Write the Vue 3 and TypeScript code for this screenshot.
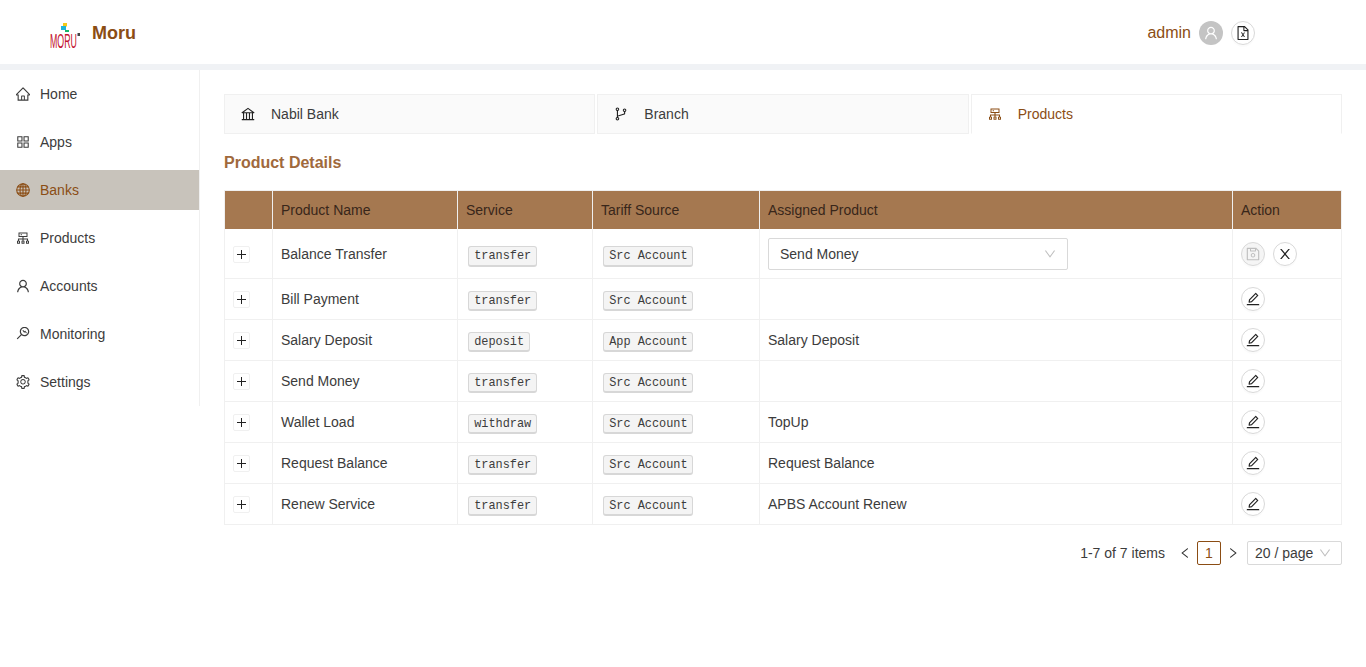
<script setup lang="ts">
const P: Record<string, string> = {
  home: 'M946.5 505L560.1 118.8l-25.9-25.9a31.5 31.5 0 0 0-44.4 0L77.5 505a63.9 63.9 0 0 0-18.8 46c.4 35.2 29.7 63.3 64.9 63.3h42.5V940h691.8V614.3h43.4c17.1 0 33.2-6.7 45.3-18.8a63.6 63.6 0 0 0 18.7-45.3c0-17-6.7-33.1-18.8-45.2zM568 868H456V664h112v204zm217.9-325.7V868H632V640c0-22.1-17.9-40-40-40H432c-22.1 0-40 17.9-40 40v228H238.1V542.3h-96l370-369.7 23.1 23.1L882 542.3h-96.1z',
  apps: 'M464 144H160c-8.8 0-16 7.2-16 16v304c0 8.8 7.2 16 16 16h304c8.8 0 16-7.2 16-16V160c0-8.8-7.2-16-16-16zm-52 268H212V212h200v200zm452-268H560c-8.8 0-16 7.2-16 16v304c0 8.8 7.2 16 16 16h304c8.8 0 16-7.2 16-16V160c0-8.8-7.2-16-16-16zm-52 268H612V212h200v200zM464 544H160c-8.8 0-16 7.2-16 16v304c0 8.8 7.2 16 16 16h304c8.8 0 16-7.2 16-16V560c0-8.8-7.2-16-16-16zm-52 268H212V612h200v200zm452-268H560c-8.8 0-16 7.2-16 16v304c0 8.8 7.2 16 16 16h304c8.8 0 16-7.2 16-16V560c0-8.8-7.2-16-16-16zm-52 268H612V612h200v200z',
  cluster: 'M888 680h-54V540H546v-92h238c8.8 0 16-7.2 16-16V168c0-8.8-7.2-16-16-16H240c-8.8 0-16 7.2-16 16v264c0 8.8 7.2 16 16 16h238v92H190v140h-54c-4.4 0-8 3.6-8 8v176c0 4.4 3.6 8 8 8h176c4.4 0 8-3.6 8-8V688c0-4.4-3.6-8-8-8h-54v-72h220v72h-54c-4.4 0-8 3.6-8 8v176c0 4.4 3.6 8 8 8h176c4.4 0 8-3.6 8-8V688c0-4.4-3.6-8-8-8h-54v-72h220v72h-54c-4.4 0-8 3.6-8 8v176c0 4.4 3.6 8 8 8h176c4.4 0 8-3.6 8-8V688c0-4.4-3.6-8-8-8zM256 805.3c0 1.5-1.2 2.7-2.7 2.7h-58.7c-1.5 0-2.7-1.2-2.7-2.7v-58.7c0-1.5 1.2-2.7 2.7-2.7h58.7c1.5 0 2.7 1.2 2.7 2.7v58.7zm288 0c0 1.5-1.2 2.7-2.7 2.7h-58.7c-1.5 0-2.7-1.2-2.7-2.7v-58.7c0-1.5 1.2-2.7 2.7-2.7h58.7c1.5 0 2.7 1.2 2.7 2.7v58.7zM288 384V216h448v168H288zm544 421.3c0 1.5-1.2 2.7-2.7 2.7h-58.7c-1.5 0-2.7-1.2-2.7-2.7v-58.7c0-1.5 1.2-2.7 2.7-2.7h58.7c1.5 0 2.7 1.2 2.7 2.7v58.7zM360 300a40 40 0 1 0 80 0 40 40 0 1 0-80 0z',
  user: 'M858.5 763.6a374 374 0 0 0-80.6-119.5 375.63 375.63 0 0 0-119.5-80.6c-.4-.2-.8-.3-1.2-.5C719.5 518 760 444.7 760 362c0-137-111-248-248-248S264 225 264 362c0 82.7 40.5 156 102.8 201.1-.4.2-.8.3-1.2.5-44.8 18.9-85 46-119.5 80.6a375.63 375.63 0 0 0-80.6 119.5A371.7 371.7 0 0 0 136 901.8a8 8 0 0 0 8 8.2h60c4.4 0 7.9-3.5 8-7.8 2-77.2 33-149.5 87.8-204.3 56.7-56.7 132-87.9 212.2-87.9s155.5 31.2 212.2 87.9C779 752.7 810 825 812 902.2c.1 4.4 3.6 7.8 8 7.8h60a8 8 0 0 0 8-8.2c-1-47.8-10.9-94.3-29.5-138.2zM512 534c-45.9 0-89.1-17.9-121.6-50.4S340 407.9 340 362c0-45.9 17.9-89.1 50.4-121.6S466.1 190 512 190s89.1 17.9 121.6 50.4S684 316.1 684 362c0 45.9-17.9 89.1-50.4 121.6S557.9 534 512 534z',
  monitor: 'M692.8 412.7l.2-.2-34.6-44.3a7.97 7.97 0 0 0-11.2-1.4l-50.4 39.3-70.5-90.1a7.97 7.97 0 0 0-11.2-1.4l-37.9 29.7a7.97 7.97 0 0 0-1.4 11.2l70.5 90.2-.2.1 34.6 44.3c2.7 3.5 7.7 4.1 11.2 1.4l50.4-39.3 64.1 82c2.7 3.5 7.7 4.1 11.2 1.4l37.9-29.6c3.5-2.7 4.1-7.7 1.4-11.2l-64.1-82.1zM608 112c-167.9 0-304 136.1-304 304 0 70.3 23.9 135 63.9 186.5L114.3 856.1a8.03 8.03 0 0 0 0 11.3l42.3 42.3c3.1 3.1 8.2 3.1 11.3 0l253.6-253.6c51.5 40 116.2 63.9 186.5 63.9 167.9 0 304-136.1 304-304S775.9 112 608 112zm161.2 465.2C726.2 620.3 668.9 644 608 644s-118.2-23.7-161.2-66.8C403.7 534.2 380 476.9 380 416s23.7-118.2 66.8-161.2c43-43.1 100.3-66.8 161.2-66.8s118.2 23.7 161.2 66.8c43.1 43 66.8 100.3 66.8 161.2s-23.7 118.2-66.8 161.2z',
  setting: 'M924.8 625.7l-65.5-56c3.1-19 4.7-38.4 4.7-57.8s-1.6-38.8-4.7-57.8l65.5-56a32.03 32.03 0 0 0 9.3-35.2l-.9-2.6a443.74 443.74 0 0 0-79.7-137.9l-1.8-2.1a32.12 32.12 0 0 0-35.1-9.5l-81.3 28.9c-30-24.6-63.5-44-99.7-57.6l-15.7-85a32.05 32.05 0 0 0-25.8-25.7l-2.7-.5c-52.1-9.4-106.9-9.4-159 0l-2.7.5a32.05 32.05 0 0 0-25.8 25.7l-15.8 85.4a351.86 351.86 0 0 0-99 57.4l-81.9-29.1a32 32 0 0 0-35.1 9.5l-1.8 2.1a446.02 446.02 0 0 0-79.7 137.9l-.9 2.6c-4.5 12.5-.8 26.5 9.3 35.2l66.3 56.6c-3.1 18.8-4.6 38-4.6 57.1 0 19.2 1.5 38.4 4.6 57.1L99 625.5a32.03 32.03 0 0 0-9.3 35.2l.9 2.6c18.1 50.4 44.9 96.9 79.7 137.9l1.8 2.1a32.12 32.12 0 0 0 35.1 9.5l81.9-29.1c29.8 24.5 63.1 43.9 99 57.4l15.8 85.4a32.05 32.05 0 0 0 25.8 25.7l2.7.5a449.4 449.4 0 0 0 159 0l2.7-.5a32.05 32.05 0 0 0 25.8-25.7l15.7-85a350 350 0 0 0 99.7-57.6l81.3 28.9a32 32 0 0 0 35.1-9.5l1.8-2.1c34.8-41.1 61.6-87.5 79.7-137.9l.9-2.6c4.5-12.3.8-26.3-9.3-35zM788.3 465.9c2.5 15.1 3.8 30.6 3.8 46.1s-1.3 31-3.8 46.1l-6.6 40.1 74.7 63.9a370.03 370.03 0 0 1-42.6 73.6L721 702.8l-31.4 25.8c-23.9 19.6-50.5 35-79.3 45.8l-38.1 14.3-17.9 97a377.5 377.5 0 0 1-85 0l-17.9-97.2-37.8-14.5c-28.5-10.8-55-26.2-78.7-45.7l-31.4-25.9-93.4 33.2c-17-22.9-31.2-47.6-42.6-73.6l75.5-64.5-6.5-40c-2.4-14.9-3.7-30.3-3.7-45.5 0-15.3 1.2-30.6 3.7-45.5l6.5-40-75.5-64.5c11.3-26.1 25.6-50.7 42.6-73.6l93.4 33.2 31.4-25.9c23.7-19.5 50.2-34.9 78.7-45.7l37.9-14.3 17.9-97.2c28.1-3.2 56.8-3.2 85 0l17.9 97 38.1 14.3c28.7 10.8 55.4 26.2 79.3 45.8l31.4 25.8 92.8-32.9c17 22.9 31.2 47.6 42.6 73.6L781.8 426l6.5 39.9zM512 326c-97.2 0-176 78.8-176 176s78.8 176 176 176 176-78.8 176-176-78.8-176-176-176zm79.2 255.2A111.6 111.6 0 0 1 512 614c-29.9 0-58-11.7-79.2-32.8A111.6 111.6 0 0 1 400 502c0-29.9 11.7-58 32.8-79.2C454 401.6 482.1 390 512 390c29.9 0 58 11.6 79.2 32.8A111.6 111.6 0 0 1 624 502c0 29.9-11.7 58-32.8 79.2z',
  edit: 'M257.7 752c2 0 4-.2 6-.5L431.9 722c2-.4 3.9-1.3 5.3-2.8l423.9-423.9a9.96 9.96 0 0 0 0-14.1L694.9 114.9c-1.9-1.9-4.4-2.9-7.1-2.9s-5.2 1-7.1 2.9L256.8 538.8c-1.5 1.5-2.4 3.3-2.8 5.3l-29.5 168.2a33.5 33.5 0 0 0 9.4 29.8c6.6 6.4 14.9 9.9 23.8 9.9zm67.4-174.4L687.8 215l73.3 73.3-362.7 362.6-88.9 15.7 15.6-89zM880 836H144c-17.7 0-32 14.3-32 32v36c0 4.4 3.6 8 8 8h784c4.4 0 8-3.6 8-8v-36c0-17.7-14.3-32-32-32z',
  close: 'M563.8 512l262.5-312.9c4.4-5.2.7-13.1-6.1-13.1h-79.8c-4.7 0-9.2 2.1-12.3 5.7L511.6 449.8 295.1 191.7c-3-3.6-7.5-5.7-12.3-5.7H203c-6.8 0-10.5 7.9-6.1 13.1L459.4 512 196.9 824.9A7.95 7.95 0 0 0 203 838h79.8c4.7 0 9.2-2.1 12.3-5.7l216.5-258.1 216.5 258.1c3 3.6 7.5 5.7 12.3 5.7h79.8c6.8 0 10.5-7.9 6.1-13.1L563.8 512z',
  save: 'M893.3 293.3L730.7 130.7c-7.5-7.5-16.7-13-26.7-16V112H144c-17.7 0-32 14.3-32 32v736c0 17.7 14.3 32 32 32h736c17.7 0 32-14.3 32-32V338.5c0-17-6.7-33.2-18.7-45.2zM384 184h256v104H384V184zm456 656H184V184h136v136c0 17.7 14.3 32 32 32h320c17.7 0 32-14.3 32-32V205.8l136 136V840zM512 442c-79.5 0-144 64.5-144 144s64.5 144 144 144 144-64.5 144-144-64.5-144-144-144zm0 224c-44.2 0-80-35.8-80-80s35.8-80 80-80 80 35.8 80 80-35.8 80-80 80z',
  bank: 'M894 462c30.9 0 43.8-39.7 18.7-58L530.8 126.2a31.81 31.81 0 0 0-37.6 0L111.3 404c-25.1 18.2-12.2 58 18.8 58H192v374h-72c-4.4 0-8 3.6-8 8v52c0 4.4 3.6 8 8 8h784c4.4 0 8-3.6 8-8v-52c0-4.4-3.6-8-8-8h-72V462h62zM512 196.7l271.1 197.2H240.9L512 196.7zM264 462h117v374H264V462zm189 0h117v374H453V462zm307 374H642V462h118v374z',
  branch: 'M740 161c-61.8 0-112 50.2-112 112 0 50.1 33.1 92.6 78.5 106.9v95.9L320 602.4V318.1c44.2-15 76-56.9 76-106.1 0-61.8-50.2-112-112-112s-112 50.2-112 112c0 49.2 31.8 91 76 106.1V706c-44.2 15-76 56.9-76 106.1 0 61.8 50.2 112 112 112s112-50.2 112-112c0-49.2-31.8-91-76-106.1v-27.8l423.5-138.7a50.52 50.52 0 0 0 34.9-48.2V378.2c42.9-15.8 73.6-57 73.6-105.2 0-61.8-50.2-112-112-112zm-504 51a48.01 48.01 0 0 1 96 0 48.01 48.01 0 0 1-96 0zm96 600a48.01 48.01 0 0 1-96 0 48.01 48.01 0 0 1 96 0zm408-491a48.01 48.01 0 0 1 0-96 48.01 48.01 0 0 1 0 96z',
  file: 'M854.6 288.6L639.4 73.4c-6-6-14.1-9.4-22.6-9.4H192c-17.7 0-32 14.3-32 32v832c0 17.7 14.3 32 32 32h640c17.7 0 32-14.3 32-32V311.3c0-8.5-3.4-16.7-9.4-22.7zM790.2 326H602V137.8L790.2 326zm1.8 562H232V136h302v216a42 42 0 0 0 42 42h216v494zM514.1 580.1l-61.8-102.4c-2.2-3.6-6.1-5.8-10.3-5.8h-38.4c-2.3 0-4.5.6-6.4 1.9-5.6 3.5-7.3 10.9-3.7 16.6l82.3 130.4-83.4 132.8a12.04 12.04 0 0 0 10.2 18.4h34.5c4.2 0 8-2.2 10.2-5.7L510 664.8l62.3 101.4c2.2 3.6 6.1 5.7 10.2 5.7H620c2.3 0 4.5-.7 6.5-1.9 5.6-3.6 7.2-11 3.6-16.6l-84-130.4 85.3-132.5a12.04 12.04 0 0 0-10.1-18.5h-35.7c-4.2 0-8.1 2.2-10.3 5.8l-61.2 102.3z',
  down: 'M884 256h-75c-5.1 0-9.9 2.5-12.9 6.6L512 654.2 227.9 262.6c-3-4.1-7.8-6.6-12.9-6.6h-75c-6.5 0-10.3 7.4-6.5 12.7l352.6 486.1c12.8 17.6 39 17.6 51.7 0l352.6-486.1c3.9-5.3.1-12.7-6.4-12.7z',
  left: 'M724 218.3V141c0-6.7-7.7-10.4-12.9-6.3L260.3 486.8a31.86 31.86 0 0 0 0 50.3l450.8 352.1c5.3 4.1 12.9.4 12.9-6.3v-77.3c0-4.9-2.3-9.6-6.1-12.6l-360-281 360-281.1c3.8-3 6.1-7.7 6.1-12.6z',
  right: 'M765.7 486.8L314.9 134.7A7.97 7.97 0 0 0 302 141v77.3c0 4.9 2.3 9.6 6.1 12.6l360 281.1-360 281.1c-3.9 3-6.1 7.7-6.1 12.6V883c0 6.7 7.7 10.4 12.9 6.3l450.8-352.1a31.96 31.96 0 0 0 0-50.4z'
}

const menu = [
  { label: 'Home', icon: 'home', box: '64 64 896 896' },
  { label: 'Apps', icon: 'apps', box: '64 64 896 896' },
  { label: 'Banks', icon: 'globe', box: '64 64 896 896', active: true },
  { label: 'Products', icon: 'cluster', box: '64 64 896 896' },
  { label: 'Accounts', icon: 'user', box: '64 64 896 896' },
  { label: 'Monitoring', icon: 'monitor', box: '64 128 896 896' },
  { label: 'Settings', icon: 'setting', box: '64 64 896 896' }
]

const tabs = [
  { label: 'Nabil Bank', icon: 'bank' },
  { label: 'Branch', icon: 'branch' },
  { label: 'Products', icon: 'cluster', active: true }
]

const rows = [
  { name: 'Balance Transfer', service: 'transfer', source: 'Src Account', assigned: 'Send Money', editing: true },
  { name: 'Bill Payment', service: 'transfer', source: 'Src Account', assigned: '' },
  { name: 'Salary Deposit', service: 'deposit', source: 'App Account', assigned: 'Salary Deposit' },
  { name: 'Send Money', service: 'transfer', source: 'Src Account', assigned: '' },
  { name: 'Wallet Load', service: 'withdraw', source: 'Src Account', assigned: 'TopUp' },
  { name: 'Request Balance', service: 'transfer', source: 'Src Account', assigned: 'Request Balance' },
  { name: 'Renew Service', service: 'transfer', source: 'Src Account', assigned: 'APBS Account Renew' }
]
</script>

<template>
  <div class="page">
    <header class="topbar">
      <div class="brand">
        <svg class="logo" width="32" height="32" viewBox="0 0 32 32">
          <rect x="14" y="1" width="4" height="3.5" fill="#f5c916" />
          <rect x="12" y="4" width="5" height="4" fill="#1cb4d8" />
          <rect x="16" y="8" width="4" height="2" fill="#17b56b" />
          <text transform="translate(1 26) scale(0.42 1)" font-size="21" font-family="Liberation Sans, sans-serif" fill="#c3122f">MORU</text>
          <rect x="28.5" y="11" width="2.5" height="3" fill="#444" />
        </svg>
        <span class="brand-name">Moru</span>
      </div>
      <div class="account">
        <span class="admin">admin</span>
        <span class="avatar">
          <svg width="14" height="14" viewBox="64 64 896 896" fill="#fff"><path :d="P.user" /></svg>
        </span>
        <span class="round">
          <svg width="14" height="14" viewBox="64 64 896 896" fill="#222"><path :d="P.file" /></svg>
        </span>
      </div>
    </header>
    <div class="band"></div>
    <div class="body">
      <nav class="side">
        <div v-for="m in menu" :key="m.label" class="item" :class="{ on: m.active }">
          <svg v-if="m.icon === 'globe'" class="ico" viewBox="0 0 14 14" fill="none" stroke="currentColor" stroke-width="1.1">
            <circle cx="7" cy="7" r="6.3" />
            <ellipse cx="7" cy="7" rx="3" ry="6.3" />
            <path d="M7 .7v12.6M.7 7h12.6M1.6 3.9h10.8M1.6 10.1h10.8" />
          </svg>
          <svg v-else class="ico" :viewBox="m.box" fill="currentColor"><path :d="P[m.icon]" /></svg>
          <span>{{ m.label }}</span>
        </div>
      </nav>
      <main class="main">
        <div class="tabs">
          <div v-for="t in tabs" :key="t.label" class="tab" :class="{ on: t.active }">
            <svg class="tab-ico" viewBox="64 64 896 896" fill="currentColor"><path :d="P[t.icon]" /></svg>
            <span>{{ t.label }}</span>
          </div>
        </div>
        <h2 class="title">Product Details</h2>
        <table class="grid">
          <colgroup>
            <col class="c1" /><col class="c2" /><col class="c3" /><col class="c4" /><col class="c5" /><col class="c6" />
          </colgroup>
          <thead>
            <tr>
              <th></th>
              <th>Product Name</th>
              <th>Service</th>
              <th>Tariff Source</th>
              <th>Assigned Product</th>
              <th>Action</th>
            </tr>
          </thead>
          <tbody>
            <tr v-for="r in rows" :key="r.name" :class="{ tall: r.editing }">
              <td>
                <span class="expand">
                  <svg width="17" height="17" viewBox="0 0 17 17" stroke="#222" stroke-width="1"><path d="M4 8.5h9M8.5 4v9" /></svg>
                </span>
              </td>
              <td>{{ r.name }}</td>
              <td><code>{{ r.service }}</code></td>
              <td><code>{{ r.source }}</code></td>
              <td>
                <div v-if="r.editing" class="select">
                  <span>{{ r.assigned }}</span>
                  <svg width="12" height="12" viewBox="64 64 896 896" fill="#bfbfbf"><path :d="P.down" /></svg>
                </div>
                <template v-else>{{ r.assigned }}</template>
              </td>
              <td>
                <div class="actions">
                  <template v-if="r.editing">
                    <span class="round off">
                      <svg width="14" height="14" viewBox="64 64 896 896" fill="#bfbfbf"><path :d="P.save" /></svg>
                    </span>
                    <span class="round">
                      <svg width="14" height="14" viewBox="64 64 896 896" fill="#222"><path :d="P.close" /></svg>
                    </span>
                  </template>
                  <span v-else class="round">
                    <svg width="14" height="14" viewBox="64 64 896 896" fill="#222"><path :d="P.edit" /></svg>
                  </span>
                </div>
              </td>
            </tr>
          </tbody>
        </table>
        <div class="pager">
          <span class="total">1-7 of 7 items</span>
          <span class="step"><svg width="12" height="12" viewBox="64 64 896 896" fill="#333"><path :d="P.left" /></svg></span>
          <span class="pg">1</span>
          <span class="step"><svg width="12" height="12" viewBox="64 64 896 896" fill="#333"><path :d="P.right" /></svg></span>
          <div class="size">
            <span>20 / page</span>
            <svg width="12" height="12" viewBox="64 64 896 896" fill="#bfbfbf"><path :d="P.down" /></svg>
          </div>
        </div>
      </main>
    </div>
  </div>
</template>

<style scoped>
.page {
  width: 1366px;
  min-height: 667px;
  background: #fff;
  font-family: "Liberation Sans", Arial, sans-serif;
  font-size: 14px;
  line-height: 22px;
  color: #333;
}
.topbar {
  height: 64px;
  display: flex;
  align-items: center;
  justify-content: space-between;
  padding: 2px 111px 0 49px;
  box-sizing: border-box;
}
.brand {
  display: flex;
  align-items: center;
  gap: 11px;
}
.logo {
  margin-top: 10px;
}
.brand-name {
  font-size: 18px;
  font-weight: 700;
  color: #8b4d14;
}
.account {
  display: flex;
  align-items: center;
  gap: 8px;
}
.admin {
  font-size: 16px;
  color: #8b4d14;
}
.avatar {
  width: 24px;
  height: 24px;
  border-radius: 50%;
  background: #c4c4c4;
  display: flex;
  align-items: center;
  justify-content: center;
}
.round {
  width: 24px;
  height: 24px;
  box-sizing: border-box;
  border: 1px solid #d9d9d9;
  border-radius: 50%;
  background: #fff;
  display: flex;
  align-items: center;
  justify-content: center;
  box-shadow: 0 2px 0 rgba(0, 0, 0, 0.015);
}
.round.off {
  background: #f5f5f5;
}
.band {
  height: 6px;
  background: #f0f2f5;
}
.body {
  display: flex;
  align-items: flex-start;
}
.side {
  width: 200px;
  flex: none;
  box-sizing: border-box;
  border-right: 1px solid #f0f0f0;
  padding: 4px 0;
  display: flex;
  flex-direction: column;
  gap: 8px;
}
.item {
  height: 40px;
  display: flex;
  align-items: center;
  gap: 10px;
  padding-left: 16px;
  color: #3c3c3c;
}
.item.on {
  background: #c8c3bb;
  color: #8b4d14;
}
.ico {
  width: 14px;
  height: 14px;
  flex: none;
}
.main {
  flex: 1;
  min-width: 0;
  padding: 24px 24px 0;
}
.tabs {
  display: flex;
  gap: 2px;
}
.tab {
  flex: 1;
  height: 40px;
  box-sizing: border-box;
  border: 1px solid #f0f0f0;
  background: #fafafa;
  display: flex;
  align-items: center;
  gap: 16px;
  padding-left: 16px;
  color: #3c3c3c;
}
.tab.on {
  background: #fff;
  border-bottom-color: #fff;
  color: #8b4d14;
}
.tab-ico {
  width: 14px;
  height: 14px;
  flex: none;
  color: #222;
}
.tab.on .tab-ico {
  color: #8b4d14;
}
.title {
  margin: 18px 0 16px;
  font-size: 16px;
  line-height: 22px;
  font-weight: 700;
  color: #a0693c;
}
.grid {
  width: 1118px;
  table-layout: fixed;
  border-collapse: separate;
  border-spacing: 0;
  border-left: 1px solid #f0f0f0;
  border-top: 1px solid #f0f0f0;
}
.c1 { width: 48px; }
.c2 { width: 185px; }
.c3 { width: 135px; }
.c4 { width: 167px; }
.c5 { width: 473px; }
.c6 { width: 109px; }
th {
  height: 38px;
  box-sizing: border-box;
  padding: 0 8px;
  background: #a57850;
  color: #38261a;
  font-weight: 400;
  text-align: left;
  border-right: 1px solid #f0f0f0;
}
td {
  height: 41px;
  box-sizing: border-box;
  padding: 0 8px;
  border-right: 1px solid #f0f0f0;
  border-bottom: 1px solid #f0f0f0;
  vertical-align: middle;
  color: #3c3c3c;
}
.tall td {
  height: 50px;
}
.expand {
  display: block;
  width: 17px;
  height: 17px;
  margin-top: 1px;
  box-sizing: border-box;
  border: 1px solid #f0f0f0;
  border-radius: 2px;
  overflow: hidden;
}
.tall .expand {
  margin-top: 2px;
}
.expand svg {
  display: block;
  margin: -1px;
}
code {
  margin: 0 2.38px;
  padding: 2.38px 4.76px 1.19px;
  font-family: "Liberation Mono", monospace;
  font-size: 11.9px;
  line-height: 14px;
  background: rgba(150, 150, 150, 0.1);
  border: 1px solid rgba(100, 100, 100, 0.2);
  border-bottom-width: 2px;
  border-radius: 3px;
}
.tall code {
  vertical-align: -1px;
}
.select {
  width: 300px;
  height: 32px;
  box-sizing: border-box;
  border: 1px solid #d9d9d9;
  border-radius: 2px;
  display: flex;
  align-items: center;
  justify-content: space-between;
  padding: 0 11px;
}
.actions {
  display: flex;
  gap: 8px;
}
.pager {
  margin-top: 16px;
  height: 24px;
  display: flex;
  align-items: center;
  justify-content: flex-end;
  color: #3c3c3c;
}
.total {
  margin-right: 8px;
}
.step {
  width: 24px;
  height: 24px;
  display: flex;
  align-items: center;
  justify-content: center;
}
.pg {
  width: 24px;
  height: 24px;
  box-sizing: border-box;
  border: 1px solid #8b4d14;
  border-radius: 2px;
  color: #8b4d14;
  text-align: center;
}
.size {
  width: 95px;
  height: 24px;
  margin-left: 2px;
  box-sizing: border-box;
  border: 1px solid #d9d9d9;
  border-radius: 2px;
  display: flex;
  align-items: center;
  justify-content: space-between;
  padding: 0 10px 0 7px;
}
</style>
